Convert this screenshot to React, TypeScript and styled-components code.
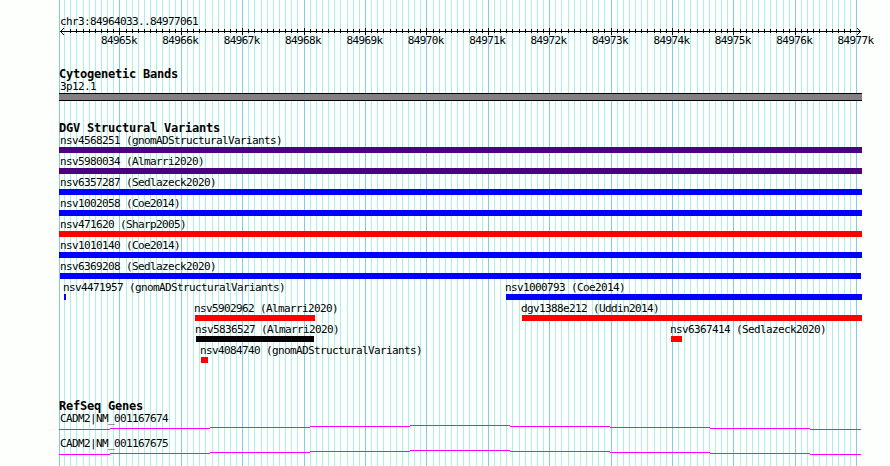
import styled, { createGlobalStyle } from "styled-components";

type Feature = {
  name: string;
  start: number;
  end: number;
  color: string;
};

const LEFT = 59;
const WIDTH = 803;
const KILOBASE = 61.4;
const FIRST_KILOBASE = 119.9;

const COLORS = {
  indigo: "#4b0082",
  blue: "#0000ff",
  red: "#ff0000",
  black: "#040004",
};

const variantRows: Feature[][] = [
  [{ name: "nsv4568251 (gnomADStructuralVariants)", start: 59, end: 862, color: COLORS.indigo }],
  [{ name: "nsv5980034 (Almarri2020)", start: 59, end: 862, color: COLORS.indigo }],
  [{ name: "nsv6357287 (Sedlazeck2020)", start: 59, end: 862, color: COLORS.blue }],
  [{ name: "nsv1002058 (Coe2014)", start: 59, end: 862, color: COLORS.blue }],
  [{ name: "nsv471620 (Sharp2005)", start: 59, end: 862, color: COLORS.red }],
  [{ name: "nsv1010140 (Coe2014)", start: 59, end: 862, color: COLORS.blue }],
  [{ name: "nsv6369208 (Sedlazeck2020)", start: 60, end: 861, color: COLORS.blue }],
  [
    { name: "nsv4471957 (gnomADStructuralVariants)", start: 64, end: 66, color: COLORS.blue },
    { name: "nsv1000793 (Coe2014)", start: 506, end: 862, color: COLORS.blue },
  ],
  [
    { name: "nsv5902962 (Almarri2020)", start: 195, end: 315, color: COLORS.red },
    { name: "dgv1388e212 (Uddin2014)", start: 522, end: 862, color: COLORS.red },
  ],
  [
    { name: "nsv5836527 (Almarri2020)", start: 196, end: 314, color: COLORS.black },
    { name: "nsv6367414 (Sedlazeck2020)", start: 671, end: 682, color: COLORS.red },
  ],
  [{ name: "nsv4084740 (gnomADStructuralVariants)", start: 201, end: 208, color: COLORS.red }],
];

const genes = ["CADM2|NM_001167674", "CADM2|NM_001167675"];

const ticks = Array.from({ length: 130 }, (_, i) => ({
  x: Math.floor(FIRST_KILOBASE + ((i - 9) * KILOBASE) / 10) - LEFT,
  major: (i - 9) % 10 === 0,
})).filter(({ x }) => x < 798);

const kilobases = Array.from({ length: 13 }, (_, i) => `${84965 + i}k`);

const GridLines = () => (
  <GridSvg width={WIDTH} height={466} shapeRendering="crispEdges">
    <rect x={0} width={1} height={466} fill="#82caee" />
    {ticks.map(({ x, major }) => (
      <rect key={x} x={x} width={1} height={466} fill={major ? "#82caee" : "#afeeee"} />
    ))}
  </GridSvg>
);

// The outermost ticks give way to the arrow heads
const Ruler = () => (
  <RulerSvg width={WIDTH} height={9} shapeRendering="crispEdges">
    <rect x={1} y={4} width={801} height={1} />
    {ticks.slice(1, -1).map(({ x, major }) => (
      <rect key={x} x={x} y={major ? 1 : 2} width={1} height={major ? 7 : 4} />
    ))}
    {[1, 2, 3].map((n) => (
      <g key={n}>
        <rect x={1 + n} y={4 - n} width={1} height={1} />
        <rect x={1 + n} y={4 + n} width={1} height={1} />
        <rect x={801 - n} y={4 - n} width={1} height={1} />
        <rect x={801 - n} y={4 + n} width={1} height={1} />
      </g>
    ))}
  </RulerSvg>
);

// Introns are drawn as a shallow hat, stepping one pixel at a time
const Intron = () => (
  <IntronSvg width={WIDTH} height={5} shapeRendering="crispEdges">
    {[4, 3, 2, 1, 0, 1, 2, 3, 4].map((y, i) => {
      const start = i === 0 ? 0 : i * 100 - 49;
      const end = Math.min(i * 100 + 51, 802);
      return <rect key={i} x={start} y={y} width={end - start} height={1} fill="#ff00ff" />;
    })}
  </IntronSvg>
);

export default function App() {
  return (
    <>
      <GlobalStyle />
      <Browser>
        <GridLines />
        <Region>chr3:84964033..84977061</Region>
        <Ruler />
        <Scale>
          {kilobases.map((label) => (
            <ScaleLabel key={label}>{label}</ScaleLabel>
          ))}
        </Scale>
        <Track $gap={20}>
          <TrackTitle>Cytogenetic Bands</TrackTitle>
          <Label>3p12.1</Label>
          <Band />
        </Track>
        <Track $gap={20}>
          <TrackTitle>DGV Structural Variants</TrackTitle>
          {variantRows.map((row, i) => (
            <Row key={i}>
              {row.map(({ name, start, end, color }) => (
                <FeatureBox key={name} $start={start - LEFT}>
                  <Label $indent={start > 60 ? -1 : LEFT + 1 - start}>{name}</Label>
                  <Bar $width={end - start} $color={color} />
                </FeatureBox>
              ))}
            </Row>
          ))}
        </Track>
        <Track $gap={34}>
          <TrackTitle>RefSeq Genes</TrackTitle>
          {genes.map((gene) => (
            <Gene key={gene}>
              <Label>{gene}</Label>
              <Intron />
            </Gene>
          ))}
        </Track>
      </Browser>
    </>
  );
}

const GlobalStyle = createGlobalStyle`
  body {
    margin: 0;
    background-color: #fdfffc;
    color: #000;
    overflow: hidden;
  }
`;

const Browser = styled.main`
  position: relative;
  box-sizing: border-box;
  width: 890px;
  height: 466px;
  padding: 15px 0 0 ${LEFT}px;
  overflow: hidden;

  font-family: "DejaVu Sans Mono", monospace;
  font-size: 11px;
  line-height: 13px;
  letter-spacing: -0.622px;
  white-space: pre;
`;

const GridSvg = styled.svg`
  position: absolute;
  top: 0;
  left: ${LEFT}px;
  z-index: -1;
`;

const Region = styled.div`
  height: 12px;
  padding-left: 1px;
`;

const RulerSvg = styled.svg`
  display: block;
`;

const Scale = styled.div`
  display: flex;
  height: 13px;
  margin: -2px 0 0 29.2px;
`;

const ScaleLabel = styled.div`
  flex: none;
  width: ${KILOBASE}px;
  text-align: center;
`;

const Track = styled.section<{ $gap: number }>`
  width: ${WIDTH}px;
  padding-top: ${({ $gap }) => $gap}px;
`;

const TrackTitle = styled.h2`
  height: 13px;
  margin: 0;

  font-size: 12px;
  font-weight: bold;
  line-height: 14px;
  letter-spacing: -0.224px;
`;

const Label = styled.div<{ $indent?: number }>`
  height: 12px;
  margin-left: ${({ $indent = 1 }) => $indent}px;
`;

const Band = styled.div`
  box-sizing: border-box;
  height: 8px;
  margin-top: 1px;
  border: solid #000;
  border-width: 1px 0;
  background-color: #838083;
`;

const Row = styled.div`
  display: grid;
  height: 21px;
`;

const FeatureBox = styled.div<{ $start: number }>`
  grid-area: 1 / 1;
  margin-left: ${({ $start }) => $start}px;
`;

const Bar = styled.div<{ $width: number; $color: string }>`
  width: ${({ $width }) => $width}px;
  height: 6px;
  margin-top: 1px;
  background-color: ${({ $color }) => $color};
`;

const Gene = styled.div`
  height: 25px;
`;

const IntronSvg = styled.svg`
  display: block;
  margin-top: 1px;
`;
